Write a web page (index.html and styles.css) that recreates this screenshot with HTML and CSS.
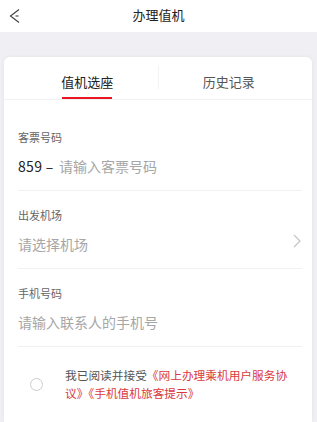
FILE: index.html
```html
<!DOCTYPE html>
<html lang="zh-CN">
<head>
  <meta charset="UTF-8">
  <meta name="viewport" content="width=device-width, initial-scale=1">
  <title>办理值机</title>
  <link rel="stylesheet" href="styles.css">
</head>
<body>
  <header class="topbar">
    <span class="back">
      <svg width="14" height="16" viewBox="0 0 14 16">
        <path d="M11 1.5 L2.5 8 L11 14.5" fill="none" stroke="#444" stroke-width="1.2"/>
        <path d="M7.5 8 H10.5" stroke="#444" stroke-width="1.1"/>
      </svg>
    </span>
    <h1 class="title">办理值机</h1>
    <span></span>
  </header>

  <main class="page">
    <div class="card">
      <div class="tabs">
        <div class="tab active">
          <span class="tab-text">值机选座</span>
          <span class="tab-line"></span>
        </div>
        <span class="tab-sep"></span>
        <div class="tab">
          <span class="tab-text">历史记录</span>
        </div>
      </div>

      <div class="form">
        <div class="field">
          <div class="label">客票号码</div>
          <div class="value"><span class="prefix">859 – </span><span class="ph">请输入客票号码</span></div>
        </div>
        <div class="field">
          <div class="label">出发机场</div>
          <div class="value select">
            <span class="ph">请选择机场</span>
            <svg class="arrow" width="8" height="14" viewBox="0 0 8 14">
              <path d="M1 1 L7 7 L1 13" fill="none" stroke="#c4c4c4" stroke-width="1.2"/>
            </svg>
          </div>
        </div>
        <div class="field">
          <div class="label">手机号码</div>
          <div class="value"><span class="ph">请输入联系人的手机号</span></div>
        </div>

        <div class="agree">
          <span class="radio"></span>
          <p class="agree-text">我已阅读并接受<span class="red">《网上办理乘机用户服务协议》《手机值机旅客提示》</span></p>
        </div>
      </div>
    </div>
  </main>
</body>
</html>
```

FILE: styles.css
```css
body {
  margin: 0;
  background: #f0f0f4;
  font-family: "Noto Sans CJK SC", "Noto Sans", sans-serif;
  color: #222;
}
.topbar {
  height: 32px;
  background: #fff;
  display: grid;
  grid-template-columns: 40px 1fr 40px;
  align-items: center;
}
.back {
  display: flex;
  padding-left: 8px;
}
.title {
  margin: 0;
  text-align: center;
  font-size: 13px;
  font-weight: normal;
  color: #222;
  padding-bottom: 3px;
}
.page {
  padding: 25px 5px 0 4px;
}
.card {
  background: #fff;
  border-radius: 6px 6px 0 0;
  box-shadow: 0 0 4px rgba(0,0,0,0.06);
  height: 365px;
  overflow: hidden;
}
.tabs {
  display: flex;
  padding: 0 13px;
  border-bottom: 1px solid #f1f1f1;
}
.tab {
  flex: 1;
  display: flex;
  flex-direction: column;
  align-items: center;
  padding-top: 16px;
  height: 26px;
}
.tab-text {
  font-size: 13px;
  line-height: 18px;
  color: #555;
}
.tab.active .tab-text {
  color: #222;
}
.tab-line {
  margin-top: 6px;
  width: 50px;
  height: 2px;
  background: #e8171f;
}
.tab-sep {
  width: 1px;
  height: 24px;
  margin-top: 8px;
  background: #f3f3f3;
}
.form {
  padding: 13px 10px 0 14px;
}
.field {
  padding: 16px 0 14px;
  border-bottom: 1px solid #f1f1f1;
}
.label {
  font-size: 11px;
  line-height: 16px;
  color: #666;
}
.value {
  margin-top: 11px;
  font-size: 14px;
  line-height: 20px;
}
.prefix {
  color: #222;
  letter-spacing: 0.3px;
  margin-right: 2px;
}
.ph {
  color: #a6a6a6;
}
.select {
  display: flex;
  justify-content: space-between;
  align-items: center;
}
.arrow {
  margin-right: 1px;
  margin-bottom: 6px;
}
.agree {
  display: flex;
  align-items: center;
  padding-top: 19px;
}
.radio {
  width: 11px;
  height: 11px;
  border: 1px solid #ccc;
  border-radius: 50%;
  margin: 0 22px 0 12px;
  flex-shrink: 0;
}
.agree-text {
  margin: 0;
  width: 226px;
  font-size: 11.7px;
  line-height: 18px;
  color: #555;
}
.red {
  color: #d9393e;
}
```
